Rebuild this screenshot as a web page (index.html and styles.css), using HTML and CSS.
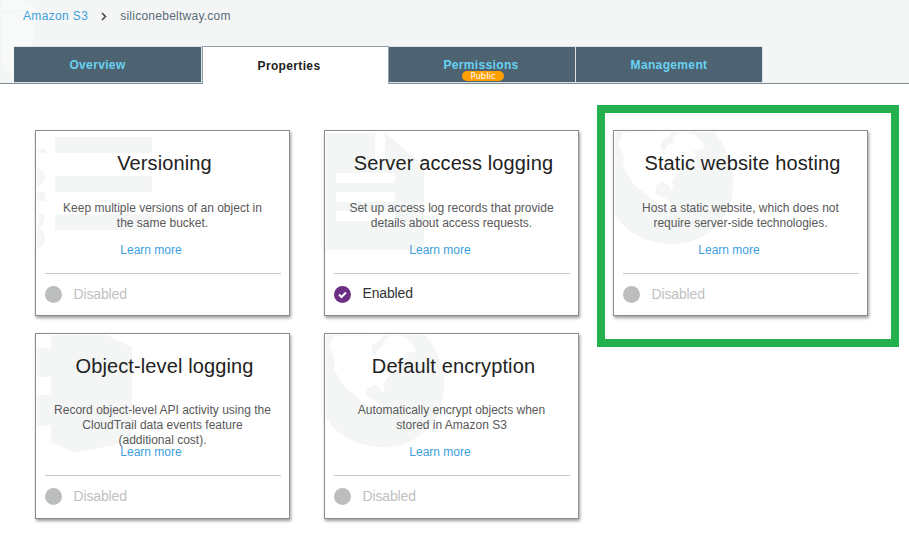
FILE: index.html
```html
<!DOCTYPE html>
<html lang="en">
<head>
<meta charset="utf-8">
<title>Amazon S3</title>
<link rel="stylesheet" href="styles.css">
</head>
<body>
<svg class="defs" width="0" height="0" aria-hidden="true">
  <symbol id="globe" viewBox="0 0 120 120">
    <path d="M1 1H100Q119 23 119 53C119 88 92 113 58 113C32 113 11 101 1 83Z" fill="#f4f6f6"/>
    <path d="M9 2L5 10L4 13L8 20L10 28L9 36L13 42L16 47L21 55L28 60L35 66L42 71L48 75L55 77L56 72L50 66L45 64L41 62L42 55L49 51L54 54L57 59L60 57L58 50L62 44L69 38L72 31L78 29L82 24L79 20L91 17L88 10L80 3L66 1L59 7L60 11L53 15L50 22L46 15L48 10L55 6L58 1Z" fill="#fff"/>
  </symbol>
</svg>
<header class="top">
  <svg class="bucket" viewBox="0 0 60 83" aria-hidden="true"><path d="M1 0H22Q36 5 38 12Q20 8 1 12Z" fill="#f8f9f9"/><path d="M1 14Q20 9 37 14L32 46H14V83H13Q5 66 1 62Z" fill="#f8f9f9"/></svg>
  <nav class="crumbs"><a>Amazon S3</a><svg width="6" height="9" viewBox="0 0 6 9"><path d="M1 1L4.5 4.5L1 8" fill="none" stroke="#444" stroke-width="1.5"/></svg><span>siliconebeltway.com</span></nav>
  <nav class="tabs">
    <div class="tab overview">Overview</div>
    <div class="tab active">Properties</div>
    <div class="tab permissions">Permissions<span class="badge">Public</span></div>
    <div class="tab">Management</div>
  </nav>
</header>
<main class="cards">
  <section class="card">
    <svg class="art" viewBox="0 0 120 120"><path d="M21 6H114Q116 6 116 8V20Q116 22 114 22H21Q19 22 19 20V8Q19 6 21 6ZM21 45H114Q116 45 116 47V59Q116 61 114 61H21Q19 61 19 59V47Q19 45 21 45ZM21 83H114Q116 83 116 85V97Q116 99 114 99H21Q19 99 19 97V85Q19 83 21 83ZM1 18H10V22H1ZM1 36Q9 40 9 46T1 56ZM1 61H9V70H1ZM2 83H9Q7 94 4 98Q9 101 9 108Q9 115 1 118V96Q4 90 2 83Z" fill="#f4f6f6"/></svg>
    <h2>Versioning</h2>
    <p>Keep multiple versions of an object in<br>the same bucket.</p>
    <a>Learn more</a>
    <div class="status"><i class="dot"></i>Disabled</div>
  </section>
  <section class="card">
    <svg class="art" viewBox="0 0 120 120"><path d="M1 2H50V32H99V119H1Z M60 2L95 31H60Z" fill="#f4f6f6"/><g fill="#fff"><rect x="11" y="42" width="59" height="10" rx="2"/><rect x="11" y="61" width="59" height="10" rx="2"/><rect x="11" y="80" width="59" height="10" rx="2"/></g></svg>
    <h2>Server access logging</h2>
    <p>Set up access log records that provide<br>details about access requests.</p>
    <a>Learn more</a>
    <div class="status enabled"><svg class="dot" viewBox="0 0 17 17"><path d="M5 8.5L7.5 11L12 6.5" fill="none" stroke="#fff" stroke-width="2"/></svg><span>Enabled</span></div>
  </section>
  <section class="card highlighted">
    <svg class="art" viewBox="0 0 120 120"><use href="#globe"/></svg>
    <h2>Static website hosting</h2>
    <p>Host a static website, which does not<br>require server-side technologies.</p>
    <a>Learn more</a>
    <div class="status"><i class="dot"></i>Disabled</div>
  </section>
  <section class="card lower">
    <svg class="art" viewBox="0 0 120 120"><path d="M15 1H71L96 13V107L39 119L15 108V91L1 93V61H15V43H1V13L15 15Z" fill="#f4f6f6"/></svg>
    <h2>Object-level logging</h2>
    <p>Record object-level API activity using the<br>CloudTrail data events feature<br>(additional cost).</p>
    <a>Learn more</a>
    <div class="status"><i class="dot"></i>Disabled</div>
  </section>
  <section class="card lower">
    <svg class="art" viewBox="0 0 120 120"><use href="#globe"/></svg>
    <h2>Default encryption</h2>
    <p>Automatically encrypt objects when<br>stored in Amazon S3</p>
    <a>Learn more</a>
    <div class="status"><i class="dot"></i>Disabled</div>
  </section>
</main>
</body>
</html>
```
FILE: styles.css
```css
*, *::after { box-sizing: border-box; }
body { margin: 0; height: 537px; overflow: hidden; background: #fff; font-family: "Liberation Sans", Arial, sans-serif; color: #222; }
.defs { position: absolute; }
.top { position: relative; height: 84px; background: #f4f6f6; border-bottom: 1px solid #7e8b94; }
.bucket { position: absolute; left: 0; top: 0; width: 60px; height: 83px; }
.crumbs { position: relative; display: flex; align-items: center; height: 46px; padding: 0 0 14px 23px; font-size: 12px; color: #5b6b78; }
.crumbs a { letter-spacing: .35px; }
.crumbs span { letter-spacing: .25px; }
.crumbs svg { margin: 1px 13px 0 13px; }
a { color: #3d9fdd; }
.tabs { position: relative; display: flex; height: 38px; padding-left: 14px; }
.tab { position: relative; width: 187px; height: 37px; border: 1px solid #dce1e4; border-left: 0; background: #4d6371; color: #69d2f2; font-weight: bold; font-size: 12px; letter-spacing: .35px; line-height: 37px; text-align: center; }
.overview { width: 188px; padding-right: 20px; }
.permissions { padding-right: 2px; }
.active { height: 38px; background: #fff; color: #222; border: 1px solid #94a1aa; border-bottom: 0; line-height: 39px; padding-right: 13px; }
.badge { position: absolute; left: 73px; top: 24px; width: 42px; height: 10px; border-radius: 5px; background: #ff9f00; color: #fff; font: 8.5px/10px "DejaVu Sans", sans-serif; letter-spacing: 0; }
.cards { display: grid; grid-template-columns: repeat(3, 255px); grid-auto-rows: 186px; gap: 17px 34px; padding: 46px 0 0 35px; }
.card { position: relative; display: flex; flex-direction: column; align-items: center; border: 1px solid #8c8c8c; background: #fff; box-shadow: 1px 2px 3px rgba(0,0,0,.4); }
.art { position: absolute; left: 0; top: 0; width: 120px; height: 120px; }
h2 { position: relative; margin: 19px 0 0; padding-left: 4px; font-size: 20px; letter-spacing: .12px; line-height: 26px; font-weight: normal; white-space: nowrap; }
p { position: relative; margin: 25px 0 0; height: 41px; font-size: 12px; line-height: 15px; text-align: center; color: #595959; white-space: nowrap; }
.lower p { margin-top: 24px; }
.card a { position: relative; margin-right: 23px; font-size: 12px; line-height: 16px; }
.status { display: flex; align-items: center; gap: 12px; width: 236px; height: 41px; margin-top: 15px; border-top: 1px solid #c8c8c8; color: #bfbfbf; font-size: 14px; letter-spacing: -.15px; }
.dot { width: 17px; height: 17px; border-radius: 50%; background: #bcbebe; }
.enabled { color: #333; }
.enabled span { margin-top: -3px; }
.enabled .dot { background: #6b2f83; }
.highlighted::after { content: ""; position: absolute; left: -17px; top: -26px; width: 302px; height: 242px; border: 8px solid #24b04d; }
```
